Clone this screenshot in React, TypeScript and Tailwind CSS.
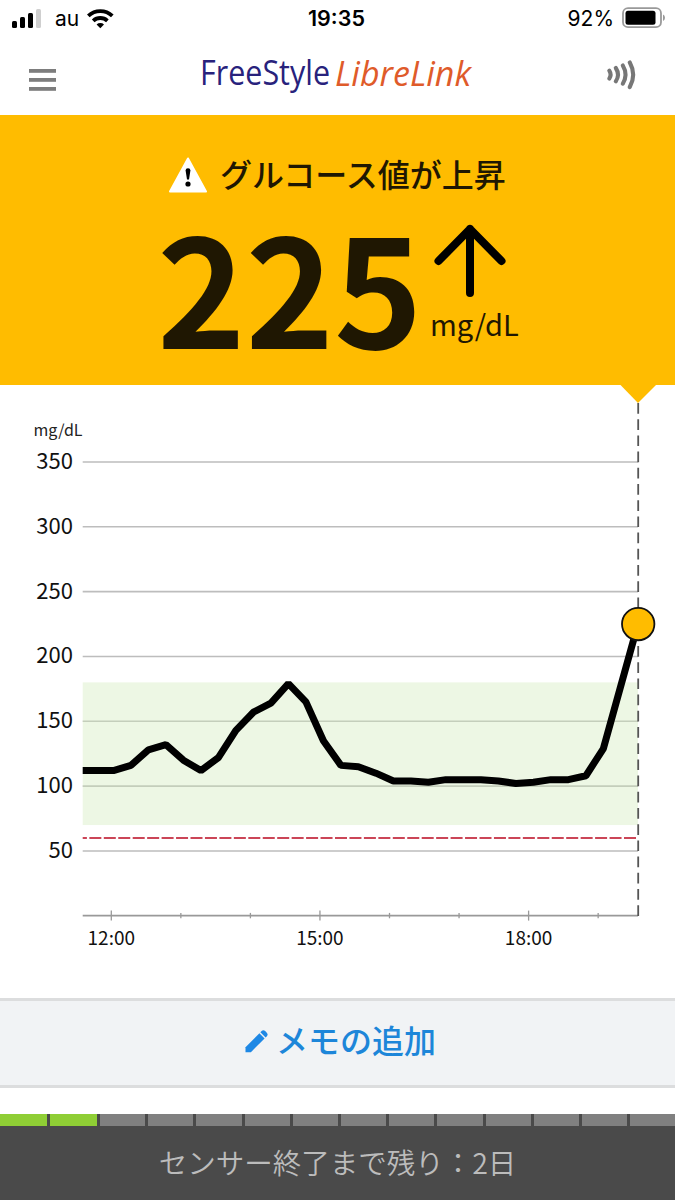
const JP = "font-['Noto_Sans_CJK_JP',sans-serif]";

interface Reading {
    x: number;
    value: number;
}

// one reading every 15 minutes
const history = [
    112, 116, 128, 132, 120, 112, 122, 143, 157, 164, 179, 165, 135, 116, 115,
    110, 104, 104, 103, 105, 105, 105, 104, 102, 103, 105, 105, 108, 129
];
const current = 225;

const LEFT = 82.7;
const RIGHT = 638;
const gridValues = [350, 300, 250, 200, 150, 100, 50];
const hours = [12, 13, 14, 15, 16, 17, 18, 19];

const yOf = (value: number) => 530.8 - value * 1.2967;
const xOf = (hour: number) => 111.3 + (hour - 12) * 69.55;

const readings: Reading[] = [
    { x: LEFT, value: 112 },
    ...history.map((value, i) => ({ x: 113.4 + i * 17.5, value })),
    { x: RIGHT, value: current }
];

function StatusBar() {
    return (
        <div className="relative flex h-[37px] items-center justify-between font-['Inter',sans-serif] text-black">
            <div className="flex items-center pl-3">
                <svg width="30" height="20" viewBox="0 0 30 20">
                    <rect x="0" y="12" width="5" height="7" rx="1.5" />
                    <rect x="8" y="8" width="5" height="11" rx="1.5" />
                    <rect x="16" y="4" width="5" height="15" rx="1.5" />
                    <rect x="24" y="0" width="5" height="19" rx="1.5" fill="#cfcfcf" />
                </svg>
                <span className="ml-[13px] w-8 text-[21px] leading-none">au</span>
                <svg width="28" height="20" viewBox="0 0 28 20">
                    <path d="M13.3 19.2 9.6 15.5a5.4 5.4 0 0 1 7.4 0z" />
                    <path d="M6.2 11.8a10.4 10.4 0 0 1 14.2 0" fill="none" stroke="#000" strokeWidth="3.8" />
                    <path d="M1.3 6.9a17.4 17.4 0 0 1 24 0" fill="none" stroke="#000" strokeWidth="3.8" />
                </svg>
            </div>
            <span className="absolute left-[308px] top-[7px] text-[21.5px] font-semibold leading-[22px]">19:35</span>
            <div className="flex items-center pr-[9px]">
                <span className="mr-2 text-[21px] leading-none">92%</span>
                <svg className="-mt-0.5" width="44" height="22" viewBox="0 0 44 22">
                    <rect x="1" y="1.2" width="38" height="19" rx="5" fill="none" stroke="#999" strokeWidth="1.8" />
                    <rect x="3.5" y="3.7" width="30" height="14" rx="2.5" />
                    <path d="M41 7.5q2 .8 2 3.2t-2 3.2z" fill="#999" />
                </svg>
            </div>
        </div>
    );
}

function Header() {
    return (
        <div className="flex h-[78px] items-start">
            <svg className="ml-[29px] mt-8" width="27" height="22" viewBox="0 0 27 22" fill="#7d7d7d">
                <rect y="0" width="27" height="3.8" />
                <rect y="9" width="27" height="3.8" />
                <rect y="18" width="27" height="3.8" />
            </svg>
            <svg className="ml-[144px] mt-2" width="276" height="60" viewBox="0 -8 276 60">
                <text x="0" y="31.5" textLength="130" lengthAdjust="spacingAndGlyphs" className="font-['Open_Sans',sans-serif] text-[34px]" fill="#28227c">FreeStyle</text>
                <text x="135" y="32.5" textLength="136" lengthAdjust="spacingAndGlyphs" className="font-['Open_Sans',sans-serif] text-[34px] font-medium italic" fill="#df5b2a">LibreLink</text>
            </svg>
            <svg className="ml-[130px] mt-[22px]" width="32" height="32" viewBox="0 0 32 32" fill="none" stroke="#777" strokeWidth="4.1" strokeLinecap="round">
                <path d="M3.3 11.6q2.6 4 0 8" />
                <path d="M9.8 9q4.4 6.7 0 13.4" />
                <path d="M16.8 6.5q5.4 9.1 0 18.2" />
                <path d="M23.8 3.5q6.8 12.3 0 24.6" />
            </svg>
        </div>
    );
}

function Banner() {
    return (
        <div className="h-[270px] bg-[#ffbc00] text-[#1f1702]">
            <div className="flex h-[94px] items-center pl-[168px] pt-[26px]">
                <svg width="40" height="36" viewBox="0 0 40 36">
                    <path d="M20 1.5 38 34.5H2z" fill="#fff" stroke="#fff" strokeWidth="2" strokeLinejoin="round" />
                    <path d="M17.6 13.5q0-2.3 2.4-2.3t2.4 2.3L21 22.5h-2z" fill="#000" />
                    <circle cx="20" cy="27" r="2.6" fill="#000" />
                </svg>
                <span className="-mt-[5px] ml-3 text-[32px] font-medium leading-none">グルコース値が上昇</span>
            </div>
            <div className="flex pl-[157px]">
                <span className="mt-[10px] w-[271px] text-[150px] font-bold leading-[130px]">225</span>
                <div className="flex flex-col">
                    <svg className="ml-1 mt-[14px]" width="76" height="76" viewBox="0 0 76 76" fill="none" stroke="#000" strokeWidth="8" strokeLinecap="round" strokeLinejoin="round">
                        <path d="M38 70V6M6.5 38 38 6l31.5 32" />
                    </svg>
                    <span className="ml-0.5 mt-1 text-[29px] leading-[40px]">mg/dL</span>
                </div>
            </div>
        </div>
    );
}

function GlucoseChart() {
    const line = readings.map((r) => `${r.x},${yOf(r.value)}`).join(' ');

    return (
        <svg className="block" width="675" height="613" viewBox="0 0 675 613">
            <path d={`M620.5 0h35.5L${RIGHT} 18z`} fill="#ffbc00" />
            <text x="33.5" y="51" fontSize="16" fill="#222">mg/dL</text>

            {gridValues.map((v) => (
                <g key={v}>
                    <line x1={LEFT} x2={RIGHT} y1={yOf(v)} y2={yOf(v)} stroke="#bdbdbd" strokeWidth="1.6" />
                    <text x="73" y={yOf(v) + 7} fontSize="22" textAnchor="end" fill="#111">{v}</text>
                </g>
            ))}

            {/* target range 70-180 */}
            <rect x={LEFT} y={yOf(180)} width={RIGHT - LEFT} height={yOf(70) - yOf(180)} fill="#d0e9b8" fillOpacity="0.38" />
            <line x1={LEFT} x2={RIGHT} y1={yOf(60)} y2={yOf(60)} stroke="#cb4557" strokeWidth="2" strokeDasharray="12 2.45" strokeDashoffset="7.8" />

            <line x1={LEFT} x2={RIGHT} y1="530.6" y2="530.6" stroke="#999" strokeWidth="1.6" />
            {hours.map((h) => {
                const half = h % 3 === 0 ? 5 : 2.7;
                return <line key={h} x1={xOf(h)} x2={xOf(h)} y1={530.6 - half} y2={530.6 + half} stroke="#999" strokeWidth="1.3" />;
            })}
            {hours.filter((h) => h % 3 === 0).map((h) => (
                <text key={h} x={xOf(h)} y="560" fontSize="19" textAnchor="middle" fill="#111">{h}:00</text>
            ))}

            <line x1={RIGHT + 0.2} x2={RIGHT + 0.2} y1="18" y2="531" stroke="#555" strokeWidth="1.8" strokeDasharray="10.7 5.5" />
            <polyline points={line} fill="none" stroke="#000" strokeWidth="7" strokeLinejoin="bevel" />
            <circle cx={RIGHT + 0.2} cy={yOf(current)} r="16.2" fill="#ffbc00" stroke="#111" strokeWidth="1.8" />
        </svg>
    );
}

function AddNote() {
    return (
        <button className="flex h-[90px] w-full items-center border-y-[3px] border-[#dcddde] bg-[#f1f3f5] pl-[245px] text-[#1d86d9]">
            <svg className="-mt-1" width="23" height="23" viewBox="0 0 23 23" fill="#1e88e5">
                <path d="M0.5 17.2 14.4 3.3 19.6 8.5 5.9 22.2H0.5z" />
                <path d="M15.4 2.3 16.6 1.1q1.7-1.5 3.6 0l1.6 1.6q1.5 1.9 0 3.6L20.6 7.5z" />
            </svg>
            <span className="-mt-2 ml-2 text-[32px] font-medium leading-none">メモの追加</span>
        </button>
    );
}

function SensorLife({ total, left }: { total: number; left: number }) {
    return (
        <div className="mt-[26px] h-[86px] bg-[#4a4a4a]">
            <div className="flex h-3">
                {Array.from({ length: total }, (_, i) => (
                    <div
                        key={i}
                        className={`border-[#4a4a4a] ${i < 2 ? 'w-[50px] shrink-0' : i < total - 1 ? 'w-[48.2px] shrink-0' : 'flex-1'} ${i < total - 1 ? 'border-r-[3px]' : ''} ${i < left ? 'bg-[#8fce35]' : 'bg-[#808080]'}`}
                    />
                ))}
            </div>
            <p className="pt-[16px] text-center text-[28.5px] font-[350] leading-[40px] text-[#bcbcbc]">
                センサー終了まで残り：{left}日
            </p>
        </div>
    );
}

export default function App() {
    return (
        <div lang="ja" className={`h-[1200px] w-[675px] overflow-hidden bg-white ${JP}`}>
            <StatusBar />
            <Header />
            <Banner />
            <GlucoseChart />
            <AddNote />
            <SensorLife total={14} left={2} />
        </div>
    );
}
